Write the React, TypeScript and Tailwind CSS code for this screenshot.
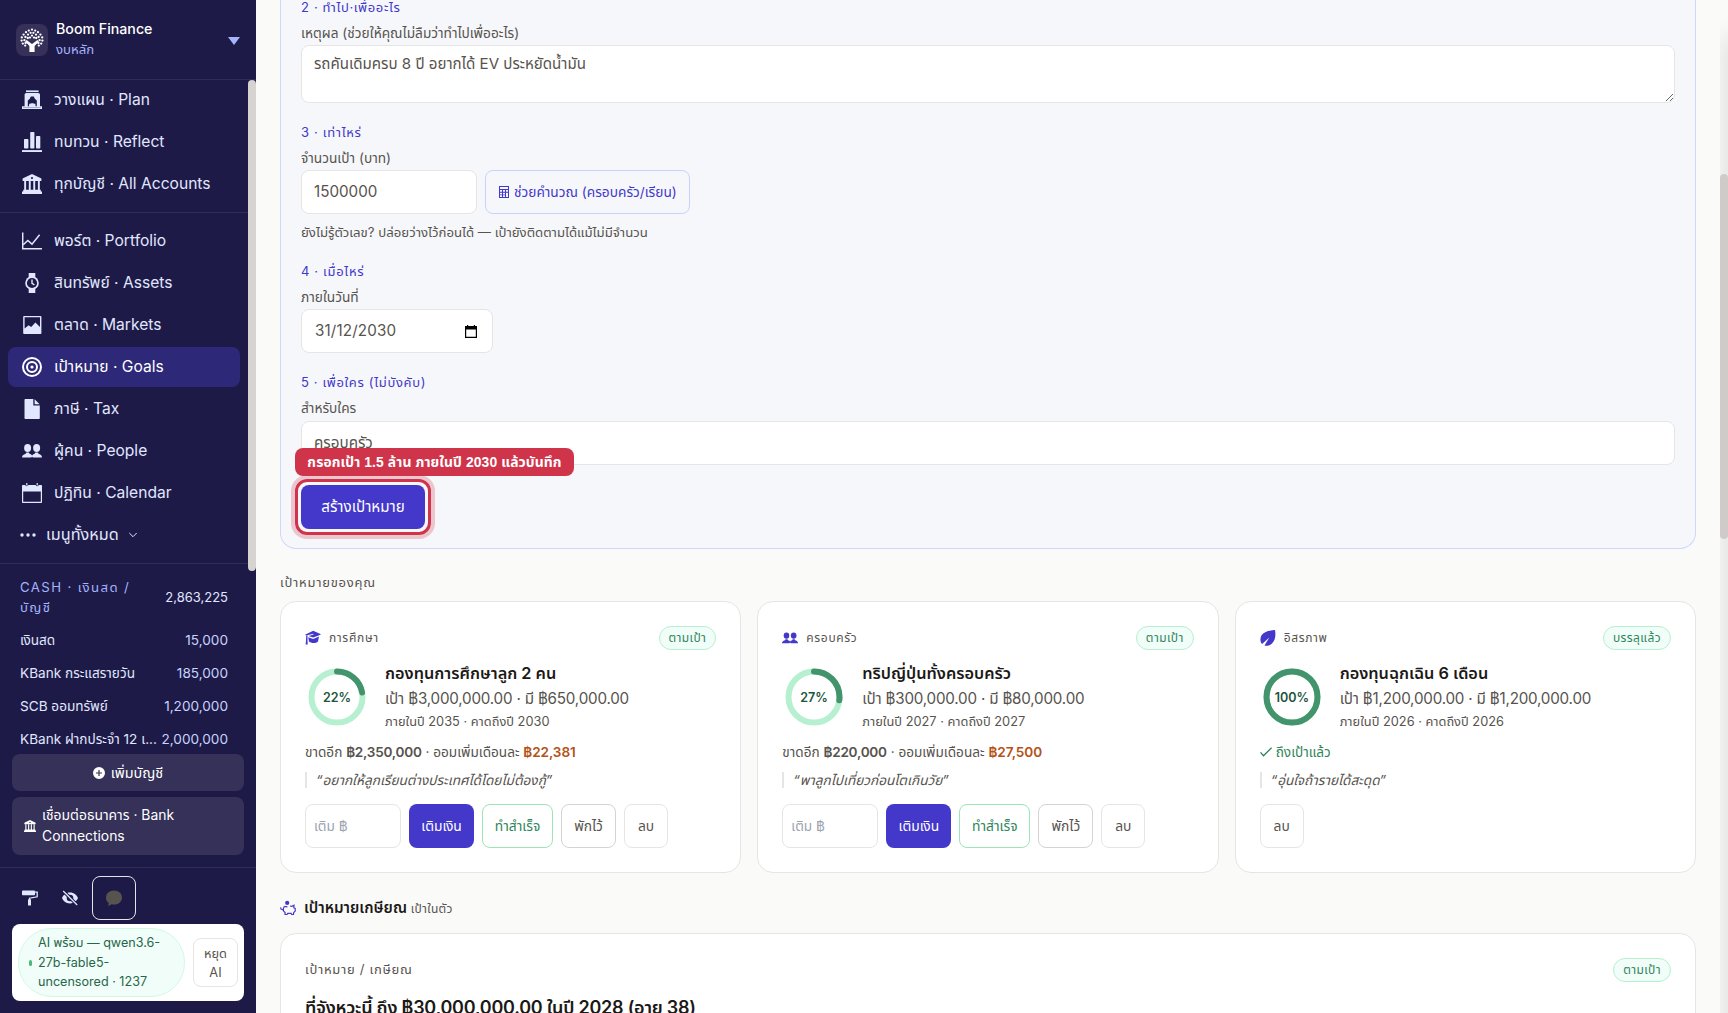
import type { ReactNode } from 'react';

type IconProps = { className?: string };

function Svg({ className = 'size-5', children, box = '0 0 20 20' }: IconProps & { children: ReactNode; box?: string }) {
  return (
    <svg viewBox={box} className={`shrink-0 ${className}`} fill="currentColor" stroke="none">
      {children}
    </svg>
  );
}

const leaves = [
  [12, 1.6], [8.8, 2.6], [15.2, 2.6], [6, 4.2], [18, 4.2], [3.6, 6.6], [20.4, 6.6], [10.6, 4.8], [13.4, 4.8],
  [1.8, 9.4], [22.2, 9.4], [5.4, 9], [18.6, 9], [8, 6.6], [16, 6.6], [1.6, 12.6], [22.4, 12.6], [4.4, 12.2],
  [19.6, 12.2], [2.8, 15.6], [21.2, 15.6], [5.6, 15], [18.4, 15], [5.2, 17.6], [18.8, 17.6], [12, 7.6], [7.8, 10],
  [16.2, 10], [10, 9.6], [14, 9.6],
];

function TreeLogo() {
  return (
    <Svg className="size-6" box="0 0 24 24">
      {leaves.map(([x, y]) => (
        <circle key={`${x}-${y}`} cx={x} cy={y} r="1.15" />
      ))}
      <path d="M9.4 24v-6L5.2 13.4 6.6 12l3.600 2.800L12 16l1.800-1.200 3.600-2.800 1.400 1.400-4.200 4.600v6z" />
    </Svg>
  );
}

function PlanIcon() {
  return (
    <Svg>
      <path d="M4 .4h12.6v1.700H4z" />
      <path
        fillRule="evenodd"
        d="M4.400 3h11.800c1 0 1.800.8 1.800 1.800v11.400h2V19H0v-2.800h2.600V4.800C2.600 3.800 3.400 3 4.400 3zm1.400 13.200h1.400V13.800h6.200v2.400h1.400V10.500l-2-1.700-1-2.300H8.800l-1 2.300-2 1.700z"
      />
      <path d="M1.300 17.200h17.400v.8H1.300z" fill="#1e1a47" opacity=".35" />
      <path d="M7 16.400c0-1.800 1.200-3.200 3.200-3.200s3.300 1.400 3.300 3.200z" />
    </Svg>
  );
}

function BarsIcon() {
  return (
    <Svg>
      <rect x="2" y="7" width="4.4" height="9.5" rx=".8" />
      <rect x="8.2" y="0" width="4.2" height="16.5" rx=".8" />
      <rect x="14" y="4" width="4.3" height="12.5" rx=".8" />
      <path d="M0 18.1h20V20H0z" />
    </Svg>
  );
}

function BankIcon({ className }: IconProps) {
  return (
    <Svg className={className}>
      <path fillRule="evenodd" d="M10 0l9.4 4.6v2.5H.6V4.600zm0 2.900a1.100 1.100 0 100 2.200 1.100 1.100 0 000-2.200z" />
      <path d="M2.200 7h1.900v9.500H2.200zM6.800 7h1.900v9.500H6.800zM11.300 7h1.900v9.500h-1.900zM15.900 7h1.900v9.500h-1.900z" />
      <path d="M1.200 15.800h17.600v1.700H20V20H0v-2.500h1.200z" />
    </Svg>
  );
}

function ChartIcon() {
  return (
    <Svg>
      <path d="M.7 1.5v16.300H20" fill="none" stroke="currentColor" strokeWidth="1.5" />
      <path d="M1.200 13.800l4.600-4.300 4.200 3.600 7.600-9.300" fill="none" stroke="currentColor" strokeWidth="1.5" />
    </Svg>
  );
}

function WatchIcon() {
  return (
    <Svg>
      <path d="M6.700 0h6.600v5H6.700zM6.700 15h6.600v5H6.700z" />
      <circle cx="10" cy="10" r="6.800" />
      <circle cx="10" cy="10" r="5.100" fill="#1e1a47" />
      <path d="M10 6.500v3.800l2.400 1.500" fill="none" stroke="currentColor" strokeWidth="1.400" />
    </Svg>
  );
}

function MarketIcon() {
  return (
    <Svg>
      <path
        fillRule="evenodd"
        d="M2 .9h16.600c.4 0 .8.4.8.8v16.500c0 .4-.4.8-.8.8H2c-.4 0-.8-.4-.8-.8V1.700c0-.4.4-.8.8-.8zm.6 1.400v11.200l4-3.200 2.600 1.700 4.200-4.500 4.600 4.500V2.300z"
      />
    </Svg>
  );
}

function TargetIcon() {
  return (
    <Svg>
      <circle cx="10" cy="10" r="9" fill="none" stroke="currentColor" strokeWidth="2" />
      <circle cx="10" cy="10" r="5" fill="none" stroke="currentColor" strokeWidth="2" />
      <circle cx="10" cy="10" r="1.600" />
    </Svg>
  );
}

function FileIcon() {
  return (
    <Svg>
      <path d="M3.500 0h7.800v6.500h6.500V19c0 .6-.4 1-1 1H3.500c-.6 0-1-.4-1-1V1c0-.6.4-1 1-1z" />
      <path d="M12.600.2l5 5h-5z" />
    </Svg>
  );
}

function PeopleIcon({ className }: IconProps) {
  return (
    <Svg className={className}>
      <ellipse cx="5.600" cy="7" rx="3.500" ry="4" />
      <ellipse cx="14.600" cy="7" rx="3.500" ry="4" />
      <path d="M0 16.600c0-1.900 1.200-3.100 3.700-3.900l.7-1.200h2.400l.7 1.200c1.300.4 2.100 1 2.600 1.800.5-.8 1.300-1.400 2.600-1.800l.7-1.200h2.400l.7 1.200c2.500.8 3.500 2 3.500 3.900h-9l-.9-.9-.9.9z" />
    </Svg>
  );
}

function CalendarIcon() {
  return (
    <Svg>
      <path
        fillRule="evenodd"
        d="M1 2h2.400c0 1.600 2.800 1.600 2.800 0h7.600c0 1.600 2.800 1.600 2.800 0H19c.6 0 1 .4 1 1v16c0 .6-.4 1-1 1H1c-.6 0-1-.4-1-1V3c0-.6.4-1 1-1zm.2 6.600v10.200h17.600V8.600z"
      />
      <path d="M4.200 0h1.200v2.600H4.200zM14.600 0h1.200v2.600h-1.200z" />
    </Svg>
  );
}

function RollerIcon() {
  return (
    <Svg className="size-4" box="0 0 16 16">
      <rect x="0" y=".6" width="13" height="4.600" rx=".8" />
      <path d="M12.500 2.200h2.700v4.600l-7.700 1.400V10" fill="none" stroke="currentColor" strokeWidth="1.300" />
      <rect x="6" y="9.200" width="3" height="6.400" rx=".6" />
    </Svg>
  );
}

function EyeOffIcon() {
  return (
    <Svg className="size-4" box="0 0 16 16">
      <path
        fillRule="evenodd"
        d="M8 2.600c4.200 0 6.800 2.700 8 5.400-1.200 2.700-3.800 5.400-8 5.400S1.200 10.700 0 8c1.200-2.700 3.800-5.400 8-5.400zm0 2.100a3.300 3.300 0 100 6.600 3.300 3.300 0 000-6.600z"
      />
      <path d="M1.200 1l14 14" stroke="#1e1a47" strokeWidth="3.200" />
      <path d="M1.200 1l14 14" stroke="currentColor" strokeWidth="1.200" />
    </Svg>
  );
}

function BubbleIcon() {
  return (
    <Svg className="size-4" box="0 0 16 16">
      <path d="M8 .4c4.600 0 8 3 8 7s-3.400 7.100-8 7.100c-.9 0-1.700-.1-2.400-.3-1 .9-2.300 1.500-3.700 1.500.7-.8.9-1.700.8-2.700C1 11.700 0 9.800 0 7.400c0-4 3.400-7 8-7z" />
    </Svg>
  );
}

function PlusCircleIcon() {
  return (
    <Svg className="size-3" box="0 0 12 12">
      <path fillRule="evenodd" d="M6 0a6 6 0 110 12A6 6 0 016 0zm-.6 3v2.400H3v1.200h2.400V9h1.200V6.600H9V5.400H6.600V3z" />
    </Svg>
  );
}

function CalcIcon() {
  return (
    <Svg className="h-3 w-2.5" box="0 0 10 12">
      <path
        fillRule="evenodd"
        d="M0 0h10v12H0zm1 1v2h8V1zm0 3v1.800h2V4zm3 0v1.800h2V4zm3 0v1.800h2V4zM1 6.700v1.700h2V6.700zm3 0v1.700h2V6.700zm3 0V11h2V6.700zM1 9.300V11h2V9.300zm3 0V11h2V9.300z"
      />
    </Svg>
  );
}

function CapIcon() {
  return (
    <Svg className="size-4" box="0 0 16 16">
      <path d="M8.200.8L16 4.200l-3 1.600-4.800 1.800L3.600 6l5-1.400-.4-.8-7 1.800L0 4.800z" />
      <path d="M3.200 7.200l5 1.800L14 6.600l-1 4.800c-2.400 2.200-6.400 2.200-9 .2z" />
      <path d="M1.200 5.400h1.300v5.400l.2 3.600H.6l.4-3.600z" />
    </Svg>
  );
}

function LeafIcon() {
  return (
    <Svg className="size-4" box="0 0 16 16">
      <path d="M15 0c1 5.600.2 10.400-3 13.400-2 1.900-4.600 2.800-7.500 2.200l4.800-8.200L2.100 14C0 11.600.2 9 1 6.600 2.600 2.600 7.600.6 15 0z" />
    </Svg>
  );
}

function PiggyIcon() {
  return (
    <Svg className="size-4" box="0 0 16 16">
      <circle cx="7.200" cy="2.900" r="2.100" />
      <path
        d="M4.400 6.200l-1 2.400v2.200l1.700 1.800-.1 1.900h2.100l.6-1.200h3.400l.6 1.200h1.800l.2-2 1.500-1.400V8.300l-1.400-.5.200-2.500-2.200 1.100-1.800-.4"
        fill="none"
        stroke="currentColor"
        strokeWidth="1.200"
      />
      <path d="M4.400 6.400l3 .4M3.400 9.800C1.200 9.900.5 8.900.8 7.300" fill="none" stroke="currentColor" strokeWidth="1.200" />
    </Svg>
  );
}

function CheckIcon() {
  return (
    <Svg className="h-2.5 w-3" box="0 0 12 10">
      <path d="M.5 5.400l3 3.400L11.600.8" fill="none" stroke="currentColor" strokeWidth="1.300" />
    </Svg>
  );
}

type NavEntry = { label: string; icon: ReactNode; active?: boolean };

const topNav: NavEntry[] = [
  { label: 'วางแผน · Plan', icon: <PlanIcon /> },
  { label: 'ทบทวน · Reflect', icon: <BarsIcon /> },
  { label: 'ทุกบัญชี · All Accounts', icon: <BankIcon /> },
];

const mainNav: NavEntry[] = [
  { label: 'พอร์ต · Portfolio', icon: <ChartIcon /> },
  { label: 'สินทรัพย์ · Assets', icon: <WatchIcon /> },
  { label: 'ตลาด · Markets', icon: <MarketIcon /> },
  { label: 'เป้าหมาย · Goals', icon: <TargetIcon />, active: true },
  { label: 'ภาษี · Tax', icon: <FileIcon /> },
  { label: 'ผู้คน · People', icon: <PeopleIcon /> },
  { label: 'ปฏิทิน · Calendar', icon: <CalendarIcon /> },
];

function NavItem({ label, icon, active }: NavEntry) {
  return (
    <a
      className={`flex h-10 items-center gap-3 rounded-lg px-3.5 text-[15.6px] whitespace-nowrap ${
        active ? 'bg-[#2e2878] text-white' : 'text-[#e0e7ff]'
      }`}
    >
      {icon}
      <span>{label}</span>
    </a>
  );
}

const accounts = [
  { name: 'เงินสด', amount: '15,000' },
  { name: 'KBank กระแสรายวัน', amount: '185,000' },
  { name: 'SCB ออมทรัพย์', amount: '1,200,000' },
  { name: 'KBank ฝากประจำ 12 เ...', amount: '2,000,000' },
];

function Sidebar() {
  return (
    <aside className="flex h-full w-64 shrink-0 flex-col bg-[#1e1a47] text-white">
      <div className="flex h-20 shrink-0 items-center gap-2 border-b border-[#302c56] px-4">
        <div className="flex size-8 items-center justify-center rounded-lg bg-[#353159]">
          <TreeLogo />
        </div>
        <div className="flex-1 pb-0.5">
          <div className="h-5 text-[14.2px] leading-5 font-medium">Boom Finance</div>
          <div className="h-5 text-[13.2px] leading-5 text-[#a5b4fc]">งบหลัก</div>
        </div>
        <svg viewBox="0 0 12 8" className="mt-0.5 h-2 w-3 fill-[#a5b4fc]">
          <path d="M0 0h12L6 8z" />
        </svg>
      </div>

      <div className="flex h-[671px] shrink-0 overflow-hidden">
        <div className="w-[248px]">
          <div className="flex h-[133px] flex-col gap-0.5 border-b border-[#302c56] px-2">
            {topNav.map((n) => (
              <NavItem key={n.label} {...n} />
            ))}
          </div>
          <div className="flex h-[351px] flex-col gap-0.5 border-b border-[#302c56] px-2 pt-2">
            {mainNav.map((n) => (
              <NavItem key={n.label} {...n} />
            ))}
            <div className="flex h-10 items-center px-3 text-[16.2px] text-[#e0e7ff]">
              <svg viewBox="0 0 16 4" className="mr-2.5 h-1 w-4 fill-current">
                <circle cx="2" cy="2" r="1.700" />
                <circle cx="8" cy="2" r="1.700" />
                <circle cx="14" cy="2" r="1.700" />
              </svg>
              <span className="pb-0.5">เมนูทั้งหมด</span>
              <svg viewBox="0 0 8 6" className="ml-2.5 h-1.5 w-2" fill="none" stroke="currentColor">
                <path d="M.3 1L4 4.700 7.700 1" />
              </svg>
            </div>
          </div>
          <div className="flex flex-col px-5 pt-3">
            <div className="flex h-11 items-center justify-between">
              <div className="w-[120px] pb-0.5 text-[13.2px] leading-5 tracking-[1.4px] text-[#a5b4fc]">
                CASH · เงินสด / บัญชี
              </div>
              <span className="text-[13px] text-[#e0e7ff]">2,863,225</span>
            </div>
            <div className="mt-1 flex flex-col">
              {accounts.map((a) => (
                <div key={a.name} className="flex h-[33px] items-center justify-between text-[13.6px] whitespace-nowrap">
                  <span className="text-[#e0e7ff]">{a.name}</span>
                  <span className="text-[13.6px] text-[#c7d2fe]">{a.amount}</span>
                </div>
              ))}
            </div>
          </div>
        </div>
        <div className="h-[491px] w-2 rounded-full bg-[#d6d3d1]" />
      </div>

      <div className="flex flex-col gap-1.5 px-3 pt-[3px]">
        <button className="flex h-[37px] items-center justify-center gap-1.5 rounded-lg bg-[#353159] text-[14.4px]">
          <PlusCircleIcon />
          เพิ่มบัญชี
        </button>
        <button className="flex h-[58px] items-center gap-1.5 rounded-lg bg-[#353159] px-3 text-left text-[13.9px] leading-[21px]">
          <BankIcon className="size-3" />
          <span>
            เชื่อมต่อธนาคาร · Bank
            <br />
            Connections
          </span>
        </button>
      </div>

      <div className="mt-3 flex flex-col border-t border-[#302c56] px-3 pt-2">
        <div className="flex h-11 items-center text-[#e0e7ff]">
          <span className="flex w-10 justify-start pl-2.5">
            <RollerIcon />
          </span>
          <span className="flex w-10 justify-start pl-2.5">
            <EyeOffIcon />
          </span>
          <button className="flex size-11 items-center justify-center rounded-lg border border-[#e7e5e4] text-[#57534e]">
            <BubbleIcon />
          </button>
        </div>
        <div className="mt-1 flex h-[77px] items-center justify-between rounded-lg bg-white px-1.5">
          <div className="flex h-[69px] w-[167px] items-center gap-1.5 rounded-[34px] border border-[#d1fae5] bg-[#f0fdf8] pl-2.5 text-[12.6px] leading-[19.5px] whitespace-nowrap text-[#276749]">
            <span className="h-1.5 w-[3px] rounded-full bg-[#48bb78]" />
            <span>
              AI พร้อม — qwen3.6-
              <br />
              27b-fable5-
              <br />
              uncensored · 1237
            </span>
          </div>
          <button className="h-[49px] w-[45px] rounded-lg border border-[#e7e5e4] text-[12.8px] leading-[19px] text-[#57534e]">
            หยุด
            <br />
            AI
          </button>
        </div>
      </div>
    </aside>
  );
}

function StepTitle({ children }: { children: ReactNode }) {
  return <div className="h-5 text-[13px] leading-5 tracking-[0.65px] text-[#4338ca]">{children}</div>;
}

function FieldLabel({ children }: { children: ReactNode }) {
  return <div className="mt-1.5 mb-0.5 h-5 text-[13.7px] leading-5 text-[#57534e]">{children}</div>;
}

function GoalForm() {
  return (
    <section className="flex h-[549px] flex-col rounded-b-2xl border border-t-0 border-[#cfd8fb] bg-[#f5f7fb] px-5 text-[#57534e]">
      <div className="-mt-[3px]">
        <StepTitle>2 · ทำไป·เพื่ออะไร</StepTitle>
        <FieldLabel>เหตุผล (ช่วยให้คุณไม่ลืมว่าทำไปเพื่ออะไร)</FieldLabel>
        <textarea
          className="block h-[58px] w-full rounded-lg border border-[#e7e5e4] bg-white px-3 py-2 text-[15.1px] leading-5 outline-none"
          defaultValue="รถคันเดิมครบ 8 ปี อยากได้ EV ประหยัดน้ำมัน"
        />
      </div>
      <div className="mt-[19px]">
        <StepTitle>3 · เท่าไหร่</StepTitle>
        <FieldLabel>จำนวนเป้า (บาท)</FieldLabel>
        <div className="flex gap-2">
          <div className="flex h-11 w-44 items-center rounded-lg border border-[#e7e5e4] bg-white px-3 pt-px text-[15.2px]">
            1500000
          </div>
          <button className="flex h-11 w-[205px] items-center gap-[5px] rounded-lg border border-[#c7d2fe] px-[13px] text-[13.7px] whitespace-nowrap text-[#4338ca]">
            <CalcIcon />
            ช่วยคำนวณ (ครอบครัว/เรียน)
          </button>
        </div>
        <div className="mt-2 h-5 text-[13.2px] leading-5">
          ยังไม่รู้ตัวเลข? ปล่อยว่างไว้ก่อนได้ — เป้ายังติดตามได้แม้ไม่มีจำนวน
        </div>
      </div>
      <div className="mt-[19px]">
        <StepTitle>4 · เมื่อไหร่</StepTitle>
        <FieldLabel>ภายในวันที่</FieldLabel>
        <div className="flex h-11 w-48 items-center justify-between rounded-lg border border-[#e7e5e4] bg-white pt-px pr-[15px] pl-[13px] text-[15.2px] tracking-[0.15px]">
          31/12/2030
          <svg viewBox="0 0 12 13" className="h-[13px] w-3 fill-black">
            <path fillRule="evenodd" d="M0 1h2V0h1.200v1h5.600V0H10v1h2v12H0zm1.200 3.400v7.400h9.600V4.400z" />
          </svg>
        </div>
      </div>
      <div className="mt-[19px]">
        <StepTitle>5 · เพื่อใคร (ไม่บังคับ)</StepTitle>
        <FieldLabel>สำหรับใคร</FieldLabel>
        <div className="mt-[3px] flex h-11 items-center rounded-lg border border-[#e7e5e4] bg-white px-3 text-[15.2px]">
          ครอบครัว
        </div>
      </div>
      <div className="relative mt-[20px] w-[124px]">
        <button className="block h-11 w-full rounded-lg bg-[#4338ca] text-[15.2px] text-white">สร้างเป้าหมาย</button>
        {/* highlight ring around the submit button */}
        <div className="absolute -inset-1.5 rounded-xl border-3 border-[#d0344b] shadow-[0_0_0_4px_rgba(208,52,75,0.25)]" />
        <div className="absolute -top-[37px] -left-1.5 flex h-7 w-[279px] items-center justify-center rounded-lg bg-[#d0344b] font-['Liberation_Sans','Noto_Sans_Thai',sans-serif] text-[13.9px] font-bold tracking-[0.1px] whitespace-nowrap text-white">
          กรอกเป้า 1.5 ล้าน ภายในปี 2030 แล้วบันทึก
        </div>
      </div>
    </section>
  );
}

function ProgressRing({ value }: { value: number }) {
  const c = 2 * Math.PI * 25.5;
  return (
    <svg viewBox="0 0 64 64" className="size-16 shrink-0">
      <circle cx="32" cy="32" r="25.5" fill="none" stroke="#b7f0d0" strokeWidth="6" />
      <circle
        cx="32"
        cy="32"
        r="25.5"
        fill="none"
        stroke="#43946c"
        strokeWidth="6"
        strokeLinecap="round"
        strokeDasharray={`${(c * value) / 100} ${c}`}
        transform="rotate(-90 32 32)"
      />
      <text x="32" y="36.500" textAnchor="middle" className="fill-[#22543d] text-[12.5px] font-semibold">
        {value}%
      </text>
    </svg>
  );
}

function StatusPill({ children }: { children: ReactNode }) {
  return (
    <span className="flex h-6 items-center rounded-full border border-[#b7f0d0] bg-[#f0fdf8] px-[9px] text-xs tracking-[0.4px] text-[#2f855a]">
      {children}
    </span>
  );
}

type Goal = {
  category: string;
  icon: ReactNode;
  status: string;
  progress: number;
  title: string;
  amounts: string;
  years: string;
  missing?: string;
  monthly?: string;
  quote: string;
};

const goals: Goal[] = [
  {
    category: 'การศึกษา',
    icon: <CapIcon />,
    status: 'ตามเป้า',
    progress: 22,
    title: 'กองทุนการศึกษาลูก 2 คน',
    amounts: 'เป้า ฿3,000,000.00 · มี ฿650,000.00',
    years: 'ภายในปี 2035 · คาดถึงปี 2030',
    missing: '฿2,350,000',
    monthly: '฿22,381',
    quote: 'อยากให้ลูกเรียนต่างประเทศได้โดยไม่ต้องกู้',
  },
  {
    category: 'ครอบครัว',
    icon: <PeopleIcon className="size-4" />,
    status: 'ตามเป้า',
    progress: 27,
    title: 'ทริปญี่ปุ่นทั้งครอบครัว',
    amounts: 'เป้า ฿300,000.00 · มี ฿80,000.00',
    years: 'ภายในปี 2027 · คาดถึงปี 2027',
    missing: '฿220,000',
    monthly: '฿27,500',
    quote: 'พาลูกไปเที่ยวก่อนโตเกินวัย',
  },
  {
    category: 'อิสรภาพ',
    icon: <LeafIcon />,
    status: 'บรรลุแล้ว',
    progress: 100,
    title: 'กองทุนฉุกเฉิน 6 เดือน',
    amounts: 'เป้า ฿1,200,000.00 · มี ฿1,200,000.00',
    years: 'ภายในปี 2026 · คาดถึงปี 2026',
    quote: 'อุ่นใจถ้ารายได้สะดุด',
  },
];

function GoalCard({ goal }: { goal: Goal }) {
  return (
    <article className="h-[272px] flex-1 rounded-2xl border border-[#e7e5e4] bg-white px-6 pt-6 text-[#57534e]">
      <div className="flex h-6 items-center justify-between">
        <div className="flex items-center gap-2 text-xs tracking-[0.65px]">
          <span className="text-[#4338ca]">{goal.icon}</span>
          {goal.category}
        </div>
        <StatusPill>{goal.status}</StatusPill>
      </div>
      <div className="mt-[9px] mb-[7px] flex h-[76px] items-center gap-4 whitespace-nowrap">
        <ProgressRing value={goal.progress} />
        <div>
          <div className="h-[25px] pt-px text-[16.300px] leading-[25px] font-semibold text-[#1c1917]">{goal.title}</div>
          <div className="h-[25px] pt-px text-[15.2px] leading-[25px] tracking-[-0.2px]">{goal.amounts}</div>
          <div className="h-6 text-[12.8px] leading-6">{goal.years}</div>
        </div>
      </div>
      <div className="h-5 text-[13.6px] leading-5 whitespace-nowrap">
        {goal.missing ? (
          <>
            ขาดอีก <b className="font-semibold tracking-[-0.25px]">{goal.missing}</b> · ออมเพิ่มเดือนละ{' '}
            <b className="font-semibold tracking-[-0.1px] text-[#b45318]">{goal.monthly}</b>
          </>
        ) : (
          <span className="flex items-center gap-1 text-[#2f855a]">
            <CheckIcon />
            ถึงเป้าแล้ว
          </span>
        )}
      </div>
      <div className="mt-2.5 h-4 border-l-2 border-[#e7e5e4] pl-[9px] text-[13.6px] leading-4 whitespace-nowrap italic">
        “{goal.quote}”
      </div>
      <div className="mt-4 flex h-11 gap-2 text-[13.8px] whitespace-nowrap">
        {goal.missing && (
          <>
            <div className="flex w-24 items-center rounded-lg border border-[#e7e5e4] px-2 text-[13.6px] text-[#9ca3af]">
              เติม ฿
            </div>
            <button className="w-[65px] rounded-lg bg-[#4338ca] text-white">เติมเงิน</button>
            <button className="w-[71px] rounded-lg border border-[#9ae6b4] text-[#2f855a]">ทำสำเร็จ</button>
            <button className="w-[55px] rounded-lg border border-[#d6d3d1]">พักไว้</button>
          </>
        )}
        <button className="w-11 rounded-lg border border-[#e7e5e4]">ลบ</button>
      </div>
    </article>
  );
}

function App() {
  return (
    <div className="flex h-[1013px] w-[1728px] overflow-hidden bg-[#fafaf9] font-['Inter','Noto_Sans_Thai','Noto_Sans',sans-serif]">
      <Sidebar />
      <main className="w-[1464px] shrink-0 px-6">
        <GoalForm />
        <h2 className="mt-[23px] h-5 text-[13px] leading-5 tracking-[0.75px] text-[#57534e]">เป้าหมายของคุณ</h2>
        <div className="mt-[9px] flex gap-4">
          {goals.map((g) => (
            <GoalCard key={g.title} goal={g} />
          ))}
        </div>
        <div className="mt-[23px] flex h-6 items-center gap-2 text-[#4338ca]">
          <PiggyIcon />
          <h3 className="text-[15.2px] font-semibold text-[#1c1917]">
            เป้าหมายเกษียณ <span className="text-xs font-normal tracking-[0.3px] text-[#57534e]">เป้าในตัว</span>
          </h3>
        </div>
        <div className="mt-[13px] h-40 rounded-2xl border border-[#e7e5e4] bg-white px-6 pt-6">
          <div className="flex h-6 items-center justify-between text-[13px] tracking-[0.7px] text-[#57534e]">
            เป้าหมาย / เกษียณ
            <StatusPill>ตามเป้า</StatusPill>
          </div>
          <div className="mt-3 text-[18px] leading-7 font-semibold tracking-[-0.25px] text-[#1c1917]">
            ที่จังหวะนี้ ถึง ฿30,000,000.00 ในปี 2028 (อายุ 38)
          </div>
        </div>
      </main>
      <div className="relative h-full flex-1 overflow-hidden pt-[174px]">
        {/* soft shadow along the right edge */}
        <div className="absolute top-10 -right-4 -bottom-10 w-4 shadow-[0_0_24px_4px_rgba(28,25,23,0.12)]" />
        <div className="relative ml-auto h-[365px] w-2 rounded-full bg-[#d0cbc8]" />
      </div>
    </div>
  );
}

export default App;
